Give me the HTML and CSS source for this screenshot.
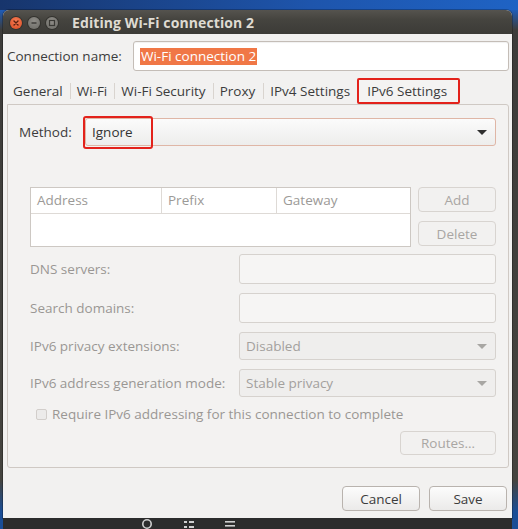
FILE: index.html
```html
<!DOCTYPE html>
<html>
<head>
<meta charset="utf-8">
<link rel="stylesheet" href="styles.css">
</head>
<body>
<div class="screen">
  <div class="window">
    <div class="titlebar">
      <div class="wbtns">
        <span class="wbtn close"><svg width="12" height="12" viewBox="0 0 12 12"><path d="M4 4L8 8M8 4L4 8" stroke="#5a2010" stroke-width="1.4" stroke-linecap="round"/></svg></span>
        <span class="wbtn"><svg width="12" height="12" viewBox="0 0 12 12"><path d="M3.5 6H8.5" stroke="#3a3935" stroke-width="1.4"/></svg></span>
        <span class="wbtn"><svg width="12" height="12" viewBox="0 0 12 12"><rect x="3.5" y="3.5" width="5" height="5" fill="none" stroke="#3a3935" stroke-width="1.2"/></svg></span>
      </div>
      <div class="title">Editing Wi-Fi connection 2</div>
    </div>
    <div class="content">
      <div class="name-row">
        <div class="name-label">Connection name:</div>
        <div class="entry name-entry"><span class="sel">Wi-Fi connection 2</span></div>
      </div>
      <div class="tabs">
        <div class="tab">General</div>
        <div class="tab">Wi-Fi</div>
        <div class="tab">Wi-Fi Security</div>
        <div class="tab">Proxy</div>
        <div class="tab">IPv4 Settings</div>
        <div class="tab active">IPv6 Settings</div>
      </div>
      <div class="panel">
        <div class="method-row">
          <div class="method-label">Method:</div>
          <div class="combo method-combo">
            <span class="combo-text">Ignore</span>
            <span class="mark"></span>
            <span class="arrow"></span>
          </div>
        </div>
        <div class="addr-row">
          <div class="table">
            <div class="thead">
              <div class="th c1">Address</div>
              <div class="th c2">Prefix</div>
              <div class="th c3">Gateway</div>
            </div>
            <div class="tbody"></div>
          </div>
          <div class="side-btns">
            <div class="btn disabled">Add</div>
            <div class="btn disabled">Delete</div>
          </div>
        </div>
        <div class="form">
          <div class="flabel">DNS servers:</div>
          <div class="entry disabled-entry"></div>
          <div class="flabel">Search domains:</div>
          <div class="entry disabled-entry"></div>
          <div class="flabel">IPv6 privacy extensions:</div>
          <div class="combo disabled-combo"><span class="combo-text">Disabled</span><span class="arrow"></span></div>
          <div class="flabel">IPv6 address generation mode:</div>
          <div class="combo disabled-combo"><span class="combo-text">Stable privacy</span><span class="arrow"></span></div>
        </div>
        <div class="check-row">
          <span class="checkbox"></span>
          <span class="check-text">Require IPv6 addressing for this connection to complete</span>
        </div>
        <div class="routes-row">
          <div class="btn disabled routes">Routes…</div>
        </div>
      </div>
      <div class="actions">
        <div class="btn action">Cancel</div>
        <div class="btn action">Save</div>
      </div>
    </div>
  </div>
  <div class="taskbar">
    <svg class="tb-icon" width="14" height="11" viewBox="0 0 14 11"><circle cx="6" cy="6" r="4.2" fill="none" stroke="#cfcfcf" stroke-width="1.6"/></svg>
    <svg class="tb-icon" width="14" height="11" viewBox="0 0 14 11"><rect x="2" y="3" width="3" height="2" fill="#cfcfcf"/><rect x="7" y="3" width="5" height="2" fill="#cfcfcf"/><rect x="2" y="8" width="3" height="2" fill="#cfcfcf"/><rect x="7" y="8" width="5" height="2" fill="#cfcfcf"/></svg>
    <svg class="tb-icon" width="14" height="11" viewBox="0 0 14 11"><rect x="2" y="3" width="10" height="1.6" fill="#cfcfcf"/><rect x="2" y="7" width="10" height="1.6" fill="#cfcfcf"/></svg>
  </div>
</div>
</body>
</html>
```
FILE: styles.css
```css
* { box-sizing: border-box; }
html, body { margin: 0; padding: 0; }
body {
  width: 518px;
  height: 529px;
  overflow: hidden;
  font-family: "Open Sans", "DejaVu Sans", sans-serif;
  font-size: 13.5px;
  color: #3c3c3c;
  background: linear-gradient(to bottom, #1d4f9e 0px, #1f5cb8 10px, #3d3c3a 30px, #45443f 480px, #1a4d96 512px);
}
.screen {
  position: relative;
  width: 518px;
  height: 529px;
  padding: 10px 6px 0 3px;
  background: linear-gradient(to right, #17356c 0, #1e55ac 60%, #1f63c4 100%) top / 100% 10px no-repeat;
}
.window {
  width: 509px;
  height: 508px;
  background: #f2f1f0;
  border-radius: 6px 6px 0 0;
  display: flex;
  flex-direction: column;
  box-shadow: 0 0 0 1px rgba(0,0,0,0.25);
}
.titlebar {
  height: 24px;
  border-radius: 6px 6px 0 0;
  background: linear-gradient(to bottom, #55534e 0, #45443f 40%, #3c3b37 100%);
  display: flex;
  align-items: center;
  padding-left: 7px;
}
.wbtns { display: flex; gap: 6px; align-items: center; padding-top: 1px; }
.wbtn {
  width: 12px; height: 12px; border-radius: 50%;
  background: radial-gradient(circle at 50% 35%, #8f8d88, #6b6a65);
  box-shadow: 0 0 0 1px #34332f;
  display: flex;
}
.wbtn.close { background: radial-gradient(circle at 50% 35%, #f77d55, #d84a22); }
.title {
  margin-left: 14px;
  color: #dfdbd2;
  font-weight: 700;
  font-size: 14px;
  letter-spacing: 0.1px;
}
.content {
  flex: 1;
  padding: 7px 3px 0 4px;
  display: flex;
  flex-direction: column;
}
.name-row { display: flex; align-items: center; height: 30px; }
.name-label { width: 126px; }
.entry {
  height: 30px;
  background: #ffffff;
  border: 1px solid #c4bdb7;
  border-radius: 3px;
  box-shadow: inset 0 1px 1px rgba(0,0,0,0.06);
  display: flex;
  align-items: center;
}
.name-entry { flex: 1; padding-left: 6px; }
.sel {
  background: #f07746;
  color: #ffffff;
  line-height: 17px;
  padding: 0 1px;
}
.tabs {
  display: flex;
  margin-top: 7px;
  height: 26px;
  align-items: center;
  padding-left: 0;
}
.tab {
  padding: 0 7px 0 6px;
  line-height: 16px;
  border-left: 1px solid #d9d4cf;
}
.tab:nth-child(2) { padding-right: 7px; }
.tab:nth-child(4) { padding-right: 8px; }
.tab:first-child { border-left: none; }
.tab.active {
  height: 26px;
  line-height: 22px;
  margin-left: 0;
  padding: 0 11px 0 8px;
  border: 2px solid #e3221b;
  border-radius: 2px;
  background: #f4f3f2;
}
.panel {
  border: 1px solid #cfc9c4;
  border-radius: 0 3px 3px 3px;
  background: #f3f2f1;
  padding: 13px 12px 12px 11px;
  height: 364px;
  display: flex;
  flex-direction: column;
}
.method-row { display: flex; align-items: center; height: 28px; }
.method-label { width: 66px; }
.combo {
  position: relative;
  height: 28px;
  border-radius: 3px;
  display: flex;
  align-items: center;
  padding-left: 6px;
}
.method-combo {
  flex: 1;
  background: linear-gradient(to bottom, #fbfbfb, #ededec);
  border: 1px solid #dfb6a6;
  color: #333;
}
.mark {
  position: absolute;
  left: -3px;
  top: -3px;
  width: 70px;
  height: 33px;
  border: 2.5px solid #e3221b;
  border-radius: 3px;
}
.arrow {
  position: absolute;
  right: 8px;
  top: 11px;
  width: 0; height: 0;
  border-left: 5px solid transparent;
  border-right: 5px solid transparent;
  border-top: 5px solid #2f2f2f;
}
.addr-row {
  display: flex;
  margin-top: 41px;
  margin-left: 11px;
  gap: 7px;
}
.table {
  width: 381px;
  height: 60px;
  background: #fff;
  border: 1px solid #cdc8c3;
  display: flex;
  flex-direction: column;
}
.thead {
  display: flex;
  height: 26px;
  border-bottom: 1px solid #dedad6;
  color: #9c9a97;
}
.th {
  padding-left: 6px;
  line-height: 25px;
}
.c1 { width: 131px; border-right: 1px solid #dedad6; }
.c2 { width: 115px; border-right: 1px solid #dedad6; }
.c3 { flex: 1; }
.side-btns { display: flex; flex-direction: column; gap: 9px; width: 78px; }
.btn {
  height: 25px;
  border-radius: 4px;
  border: 1px solid #b9b3ae;
  background: linear-gradient(to bottom, #fcfcfc, #ebeae9);
  display: flex;
  align-items: center;
  justify-content: center;
  color: #3c3c3c;
}
.btn.disabled {
  background: #f2f1f0;
  border-color: #d8d4d0;
  color: #a9a6a3;
}
.form {
  margin-top: 7px;
  margin-left: 11px;
  display: grid;
  grid-template-columns: 209px 1fr;
  grid-template-rows: 30px 30px 28px 28px;
  row-gap: 9px;
  align-items: center;
  color: #9a9794;
}
.disabled-entry {
  background: #f6f5f4;
  border-color: #d6d2ce;
  box-shadow: none;
}
.disabled-combo {
  background: #efeeed;
  border: 1px solid #d6d2ce;
  color: #a3a09d;
}
.disabled-combo .arrow { border-top-color: #a8a6a3; }
.check-row {
  margin-top: 9px;
  margin-left: 17px;
  display: flex;
  align-items: center;
  height: 16px;
  color: #9a9794;
}
.checkbox {
  width: 11px; height: 11px;
  border: 1px solid #d2cecb;
  border-radius: 2px;
  background: #ecebea;
  margin-right: 5px;
}
.routes-row {
  display: flex;
  justify-content: flex-end;
  margin-top: 9px;
}
.routes { width: 96px; height: 24px; }
.actions {
  display: flex;
  justify-content: flex-end;
  gap: 9px;
  margin-top: 18px;
  padding-right: 2px;
}
.action { width: 78px; height: 25px; }
.taskbar {
  height: 11px;
  background: #2c2c2c;
  display: flex;
  gap: 27px;
  padding-left: 138px;
  align-items: flex-start;
}
```
